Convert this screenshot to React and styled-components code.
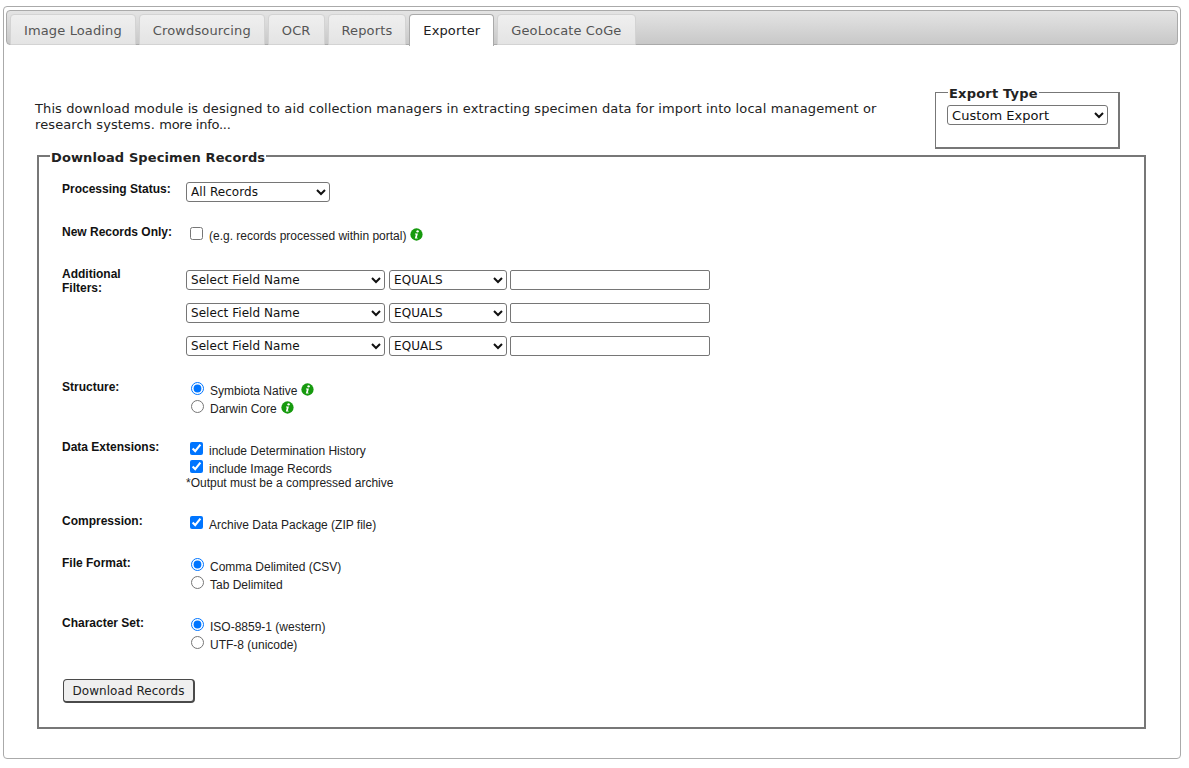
import React from "react";
import styled, { createGlobalStyle } from "styled-components";

const Global = createGlobalStyle`
  html, body { margin: 0; padding: 0; background: #fff; }
  body { font-family: "DejaVu Sans", Verdana, sans-serif; font-size: 13px; color: #222; }
`;

const Panel = styled.div`
  box-sizing: border-box;
  width: 1178px;
  height: 753px;
  margin: 6px 0 0 3px;
  padding: 3px 2px;
  border: 1px solid #aaa;
  border-radius: 4px;
  background: #fff;
`;

const TabBar = styled.ul`
  box-sizing: border-box;
  list-style: none;
  margin: 0;
  height: 35px;
  padding: 3px 0 0 3px;
  display: flex;
  gap: 3px;
  border: 1px solid #aaa;
  border-radius: 4px;
  background: linear-gradient(#e4e4e4, #c8c8c8);
`;

const Tab = styled.li`
  box-sizing: border-box;
  height: ${(p) => (p.$active ? "32px" : "31px")};
  padding: 8px 13px 0;
  border: 1px solid ${(p) => (p.$active ? "#aaa" : "#d3d3d3")};
  border-bottom: ${(p) => (p.$active ? "none" : "1px solid #d3d3d3")};
  border-radius: 4px 4px 0 0;
  background: ${(p) => (p.$active ? "#fff" : "linear-gradient(#efefef, #e4e4e4)")};
  color: ${(p) => (p.$active ? "#212121" : "#555")};
  font-size: 13px;
  line-height: 16px;
  letter-spacing: 0.13px;
  white-space: nowrap;
`;

const TopArea = styled.div`
  display: flex;
  height: 101px;
  box-sizing: border-box;
  padding-left: 29px;
`;

const Intro = styled.div`
  width: 860px;
  margin: 56px 0 0 0;
  font-size: 13px;
  line-height: 16px;
  letter-spacing: 0.1px;
  color: #222;
`;

const IntroLine = styled.div`
  white-space: nowrap;
`;

const MoreLink = styled.a`
  color: inherit;
  text-decoration: none;
  letter-spacing: -0.25px;
`;

const ExportBox = styled.fieldset`
  box-sizing: border-box;
  width: 185px;
  height: 65px;
  margin: 39px 0 0 40px;
  padding: 4px 11px 0;
  border: 2px solid #777;
  border-width: 1px 2px 2px 1px;
  min-width: 0;
`;

const ExportLegend = styled.legend`
  padding: 2px 1px 0;
  margin-left: 1px;
  font-size: 13px;
  font-weight: bold;
  line-height: 15px;
  letter-spacing: 0.2px;
`;

const RecordsBox = styled.fieldset`
  box-sizing: border-box;
  width: 1109px;
  height: 583px;
  margin: 0 0 0 31px;
  padding: 16px 24px 0 23px;
  border: 2px solid #777;
  min-width: 0;
`;

const RecordsLegend = styled.legend`
  padding: 4px 1px 0;
  margin-left: -12px;
  font-size: 13px;
  font-weight: bold;
  line-height: 15px;
  letter-spacing: 0.1px;
`;

const Row = styled.div`
  display: grid;
  grid-template-columns: 124px 1fr;
  height: ${(p) => p.$h}px;
`;

const Label = styled.div`
  padding-top: 1px;
  font-family: "Liberation Sans", Arial, sans-serif;
  font-size: 12px;
  font-weight: bold;
  line-height: 14px;
  color: #111;
  width: 90px;
  white-space: ${(p) => (p.$wrap ? "normal" : "nowrap")};
`;

const SelectCell = styled.div`
  padding-top: 1px;
`;

const Select = styled.select`
  box-sizing: border-box;
  width: ${(p) => p.$w}px;
  height: 20px;
  margin: 0 0 0 ${(p) => p.$ml || 0}px;
  padding: 0;
  font-family: "DejaVu Sans", Verdana, sans-serif;
  font-size: ${(p) => p.$fs || 12}px;
  letter-spacing: 0.05px;
  color: #111;
  background: #fff;
  border: 1px solid #767676;
  border-radius: 3px;
`;

const TextBox = styled.input`
  box-sizing: border-box;
  width: 200px;
  height: 20px;
  padding: 1px 2px;
  border: 1px solid #767676;
  border-radius: 2px;
  background: #fff;
`;

const FilterStack = styled.div`
  display: flex;
  flex-direction: column;
  gap: 13px;
  padding-top: 4px;
`;

const FilterLine = styled.div`
  display: flex;
  gap: 3px;
`;

const Options = styled.div`
  font-family: "Liberation Sans", Arial, sans-serif;
  font-size: 12px;
  color: #222;
  padding-left: 4px;
  padding-top: 3px;
`;

const OptionLine = styled.label`
  display: flex;
  align-items: center;
  height: 18px;
  line-height: 14px;
  white-space: nowrap;
`;

const Radio = styled.input.attrs({ type: "radio" })`
  width: 13px;
  height: 13px;
  margin: 0 6px 0 1px;
  position: relative;
  top: -3px;
  accent-color: #0075ff;
`;

const Check = styled.input.attrs({ type: "checkbox" })`
  width: 13px;
  height: 13px;
  margin: 0 6px 0 0;
  position: relative;
  top: -3px;
  accent-color: #0075ff;
`;

const Note = styled.div`
  margin: -2px 0 0 -4px;
  line-height: 14px;
  color: #222;
`;

const InfoSvg = styled.svg`
  width: 13px;
  height: 13px;
  margin-left: 4px;
  position: relative;
  top: -2px;
  flex: none;
`;

const DownloadButton = styled.button`
  box-sizing: border-box;
  width: 132px;
  height: 24px;
  margin: 0 0 0 1px;
  padding: 0;
  font-family: "DejaVu Sans", Verdana, sans-serif;
  font-size: 12px;
  letter-spacing: 0.05px;
  color: #222;
  background: #efefef;
  border: 1px solid #4a4a4a;
  border-right-width: 2px;
  border-bottom-width: 2px;
  border-radius: 4px;
`;

const Info = () => (
  <InfoSvg viewBox="0 0 14 14" aria-hidden="true">
    <circle cx="7" cy="7" r="6.6" fill="#169a0e" />
    <circle cx="8.2" cy="3.6" r="1.3" fill="#fff" />
    <path d="M5.4 6h3.1L7.3 10.4h1v1H5.2l1.1-4.4h-1z" fill="#fff" />
  </InfoSvg>
);

const FilterRow = () => (
  <FilterLine>
    <Select $w={199} defaultValue="f">
      <option value="f">Select Field Name</option>
    </Select>
    <Select $w={118} $ml={1} defaultValue="e">
      <option value="e">EQUALS</option>
    </Select>
    <TextBox />
  </FilterLine>
);

export default function App() {
  return (
    <Panel>
      <Global />
      <TabBar>
        <Tab>Image Loading</Tab>
        <Tab>Crowdsourcing</Tab>
        <Tab>OCR</Tab>
        <Tab>Reports</Tab>
        <Tab $active>Exporter</Tab>
        <Tab>GeoLocate CoGe</Tab>
      </TabBar>
      <TopArea>
        <Intro>
          <IntroLine>
            This download module is designed to aid collection managers in extracting specimen data for import into local management or
          </IntroLine>
          <IntroLine>
            <span>research systems. </span>
            <MoreLink href="#">more info...</MoreLink>
          </IntroLine>
        </Intro>
        <ExportBox>
          <ExportLegend>Export Type</ExportLegend>
          <Select $w={161} $fs={13} defaultValue="c">
            <option value="c">Custom Export</option>
          </Select>
        </ExportBox>
      </TopArea>
      <RecordsBox>
        <RecordsLegend>Download Specimen Records</RecordsLegend>
        <Row $h={43}>
          <Label>Processing Status:</Label>
          <SelectCell>
            <Select $w={144} defaultValue="a">
              <option value="a">All Records</option>
            </Select>
          </SelectCell>
        </Row>
        <Row $h={42}>
          <Label>New Records Only:</Label>
          <Options>
            <OptionLine>
              <Check />
              (e.g. records processed within portal)
              <Info />
            </OptionLine>
          </Options>
        </Row>
        <Row $h={113}>
          <Label $wrap>Additional Filters:</Label>
          <FilterStack>
            <FilterRow />
            <FilterRow />
            <FilterRow />
          </FilterStack>
        </Row>
        <Row $h={60}>
          <Label>Structure:</Label>
          <Options>
            <OptionLine>
              <Radio name="structure" defaultChecked />
              Symbiota Native
              <Info />
            </OptionLine>
            <OptionLine>
              <Radio name="structure" />
              Darwin Core
              <Info />
            </OptionLine>
          </Options>
        </Row>
        <Row $h={74}>
          <Label>Data Extensions:</Label>
          <Options>
            <OptionLine>
              <Check defaultChecked />
              include Determination History
            </OptionLine>
            <OptionLine>
              <Check defaultChecked />
              include Image Records
            </OptionLine>
            <Note>*Output must be a compressed archive</Note>
          </Options>
        </Row>
        <Row $h={42}>
          <Label>Compression:</Label>
          <Options>
            <OptionLine>
              <Check defaultChecked />
              Archive Data Package (ZIP file)
            </OptionLine>
          </Options>
        </Row>
        <Row $h={60}>
          <Label>File Format:</Label>
          <Options>
            <OptionLine>
              <Radio name="format" defaultChecked />
              Comma Delimited (CSV)
            </OptionLine>
            <OptionLine>
              <Radio name="format" />
              Tab Delimited
            </OptionLine>
          </Options>
        </Row>
        <Row $h={64}>
          <Label>Character Set:</Label>
          <Options>
            <OptionLine>
              <Radio name="charset" defaultChecked />
              ISO-8859-1 (western)
            </OptionLine>
            <OptionLine>
              <Radio name="charset" />
              UTF-8 (unicode)
            </OptionLine>
          </Options>
        </Row>
        <DownloadButton>Download Records</DownloadButton>
      </RecordsBox>
    </Panel>
  );
}
